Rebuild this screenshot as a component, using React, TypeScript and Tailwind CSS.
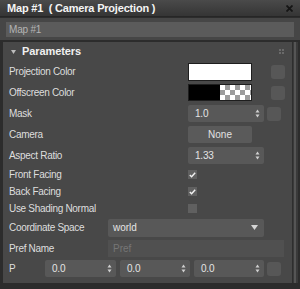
import React from "react";

const font = { fontFamily: "'Liberation Sans', Arial, sans-serif" };

function Arrows() {
  return (
    <svg width="5" height="9" viewBox="0 0 5 9" className="shrink-0">
      <path d="M2.5 0.5 L4.5 3.5 L0.5 3.5 Z" fill="#d0d0d0" />
      <path d="M2.5 8.5 L4.5 5.5 L0.5 5.5 Z" fill="#d0d0d0" />
    </svg>
  );
}

function Spinner({ value, width }: { value: string; width: string }) {
  return (
    <div
      className={`${width} h-[17px] bg-[#585858] rounded-[2px] flex items-center justify-between pl-[7px] pr-[4px] text-[10px] tracking-[-0.2px] text-[#e4e4e4]`}
    >
      <span>{value}</span>
      <Arrows />
    </div>
  );
}

function SmallBtn() {
  return <div className="w-[14px] h-[14px] bg-[#575757] rounded-[3px] ml-[3px]" />;
}

function Check({ on }: { on: boolean }) {
  return (
    <div className="w-[9px] h-[9px] bg-[#606060] flex items-center justify-center">
      {on && (
        <svg width="7" height="6" viewBox="0 0 7 6">
          <path d="M0.8 3 L2.6 4.8 L6.2 0.8" stroke="#f2f2f2" strokeWidth="1.4" fill="none" />
        </svg>
      )}
    </div>
  );
}

const labelCls = "pl-[6px] text-[10px] tracking-[-0.3px] text-[#dedede] shrink-0";

function Row({ label, h, children }: { label: string; h: string; children?: React.ReactNode }) {
  return (
    <div className={`flex items-center ${h}`}>
      <div className={`w-[185px] ${labelCls}`}>{label}</div>
      {children}
    </div>
  );
}

export default function App() {
  return (
    <div className="w-[300px] h-[289px] bg-[#2c2c2c] flex flex-col overflow-hidden" style={font}>
      {/* Title bar */}
      <div className="h-[17px] bg-gradient-to-b from-[#4a4a4a] to-[#353535] flex items-center justify-between pl-[7px] pr-[7px] border-b border-[#262626]">
        <span className="text-[11px] font-bold tracking-[-0.2px] text-[#f4f4f4] whitespace-pre">Map #1  ( Camera Projection )</span>
        <svg width="7" height="7" viewBox="0 0 7 7">
          <path d="M0.5 0.5 L6.5 6.5 M6.5 0.5 L0.5 6.5" stroke="#151515" strokeWidth="1.8" />
        </svg>
      </div>

      {/* Name field */}
      <div className="bg-[#464646] h-[22px] flex items-center pl-[6px] pr-[6px] mt-[1px]">
        <div className="flex-1 h-[15px] bg-[#5b5b5b] flex items-center pl-[3px] text-[10px] tracking-[-0.2px] text-[#b4b4b4]">
          Map #1
        </div>
      </div>

      <div className="flex flex-1 mt-[2px] pl-[3px] pr-[2px] pb-[6px]">
        {/* Panel */}
        <div className="flex-1 bg-[#484848] flex flex-col">
          <div className="h-[19px] flex items-center pl-[8px] pr-[8px] justify-between">
            <div className="flex items-center gap-[6px]">
              <svg width="5" height="4" viewBox="0 0 5 4">
                <path d="M0 0 L5 0 L2.5 4 Z" fill="#bdbdbd" />
              </svg>
              <span className="text-[11px] font-bold tracking-[-0.1px] text-[#f0f0f0]">Parameters</span>
            </div>
            <svg width="5" height="5" viewBox="0 0 5 5">
              <rect x="0" y="0" width="2" height="2" fill="#6a6a6a" />
              <rect x="3" y="0" width="2" height="2" fill="#6a6a6a" />
              <rect x="0" y="3" width="2" height="2" fill="#6a6a6a" />
              <rect x="3" y="3" width="2" height="2" fill="#6a6a6a" />
            </svg>
          </div>

          <Row label="Projection Color" h="h-[21px]">
            <div className="w-[64px] h-[18px] bg-white border border-[#1e1e1e]" />
            <div className="w-[16px]" />
            <SmallBtn />
          </Row>
          <Row label="Offscreen Color" h="h-[21px]">
            <div className="w-[64px] h-[17px] border border-[#1e1e1e] flex">
              <div className="w-[31px] h-full bg-black" />
              <div className="flex-1 h-full bg-[length:10px_10px] bg-[conic-gradient(#9c9c9c_25%,#ffffff_0_50%,#9c9c9c_0_75%,#ffffff_0)]" />
            </div>
            <div className="w-[16px]" />
            <SmallBtn />
          </Row>
          <Row label="Mask" h="h-[21px]">
            <Spinner value="1.0" width="w-[76px]" />
            <SmallBtn />
          </Row>
          <Row label="Camera" h="h-[21px]">
            <div className="w-[64px] h-[17px] bg-[#5a5a5a] rounded-[2px] flex items-center justify-center text-[10px] text-[#e2e2e2]">
              None
            </div>
          </Row>
          <Row label="Aspect Ratio" h="h-[21px]">
            <Spinner value="1.33" width="w-[76px]" />
          </Row>
          <Row label="Front Facing" h="h-[17px]">
            <Check on />
          </Row>
          <Row label="Back Facing" h="h-[17px]">
            <Check on />
          </Row>
          <Row label="Use Shading Normal" h="h-[17px]">
            <Check on={false} />
          </Row>
          <div className="flex items-center h-[21px]">
            <div className={`w-[105px] ${labelCls}`}>Coordinate Space</div>
            <div className="w-[156px] h-[18px] bg-[#585858] rounded-[2px] flex items-center justify-between pl-[5px] pr-[6px] text-[10px] text-[#e4e4e4]">
              <span>world</span>
              <svg width="7" height="5" viewBox="0 0 7 5">
                <path d="M0 0 L7 0 L3.5 5 Z" fill="#d4d4d4" />
              </svg>
            </div>
          </div>
          <div className="flex items-center h-[20px]">
            <div className={`w-[105px] ${labelCls}`}>Pref Name</div>
            <div className="w-[176px] h-[17px] bg-[#505050] flex items-center pl-[5px] text-[10px] text-[#767676]">Pref</div>
          </div>
          <div className="flex items-center h-[21px]">
            <div className={`w-[42px] ${labelCls}`}>P</div>
            <div className="flex gap-[4px]">
              <Spinner value="0.0" width="w-[71px]" />
              <Spinner value="0.0" width="w-[70px]" />
              <Spinner value="0.0" width="w-[70px]" />
            </div>
            <SmallBtn />
          </div>
        </div>
        {/* Scrollbar */}
        <div className="w-[6px] bg-[#3a3a3a] border-l border-[#2e2e2e] flex">
          <div className="w-[2px] ml-[1px] bg-[#555]" />
        </div>
      </div>
    </div>
  );
}
